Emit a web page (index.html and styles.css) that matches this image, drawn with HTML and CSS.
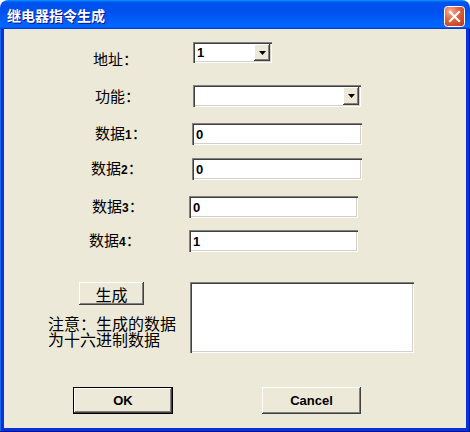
FILE: index.html
```html
<!DOCTYPE html>
<html lang="zh-CN">
<head>
<meta charset="utf-8">
<title>继电器指令生成</title>
<link rel="stylesheet" href="styles.css">
</head>
<body>
<div class="window">
  <div class="titlebar">
    <span class="title">继电器指令生成</span>
    <button class="close" aria-label="关闭">
      <svg width="21" height="21" viewBox="0 0 21 21">
        <defs>
          <radialGradient id="cg" cx="0.3" cy="0.25" r="0.9">
            <stop offset="0" stop-color="#f7b39a"/>
            <stop offset="0.45" stop-color="#e2643f"/>
            <stop offset="1" stop-color="#c23c1c"/>
          </radialGradient>
        </defs>
        <rect x="0.5" y="0.5" width="20" height="20" rx="3" fill="url(#cg)" stroke="#ffffff"/>
        <path d="M6 6 L15 15 M15 6 L6 15" stroke="#ffffff" stroke-width="2.2" stroke-linecap="square"/>
      </svg>
    </button>
  </div>
  <div class="frame">
    <div class="client">
      <div class="row r1">
        <span class="lbl">地址：</span>
        <div class="combo">
          <span class="val">1</span>
          <span class="drop"><svg width="7" height="4" viewBox="0 0 7 4"><polygon points="0,0 7,0 3.5,4" fill="#000"/></svg></span>
        </div>
      </div>
      <div class="row r2">
        <span class="lbl">功能：</span>
        <div class="combo">
          <span class="val"></span>
          <span class="drop"><svg width="7" height="4" viewBox="0 0 7 4"><polygon points="0,0 7,0 3.5,4" fill="#000"/></svg></span>
        </div>
      </div>
      <div class="row r3">
        <span class="lbl">数据<b class="num">1</b>：</span>
        <div class="tb">0</div>
      </div>
      <div class="row r4">
        <span class="lbl">数据<b class="num">2</b>：</span>
        <div class="tb">0</div>
      </div>
      <div class="row r5">
        <span class="lbl">数据<b class="num">3</b>：</span>
        <div class="tb">0</div>
      </div>
      <div class="row r6">
        <span class="lbl">数据<b class="num">4</b>：</span>
        <div class="tb">1</div>
      </div>
      <div class="bottom">
        <div class="left">
          <button class="btn gen">生成</button>
          <div class="note">
            <span class="note-line">注意：生成的数据</span>
            <span class="note-line">为十六进制数据</span>
          </div>
        </div>
        <div class="memo"></div>
      </div>
      <div class="footer">
        <button class="btn ok">OK</button>
        <button class="btn cancel">Cancel</button>
      </div>
    </div>
  </div>
</div>
</body>
</html>
```

FILE: styles.css
```css
* { box-sizing: border-box; }

body {
  margin: 0;
  background: #ffffff;
  font-family: "Noto Sans CJK SC", "Liberation Sans", sans-serif;
}

.window {
  width: 470px;
  height: 432px;
  display: flex;
  flex-direction: column;
}

.titlebar {
  height: 29px;
  flex: none;
  display: flex;
  align-items: center;
  justify-content: space-between;
  padding: 0 5px 0 7px;
  border-radius: 8px 8px 0 0;
  background: linear-gradient(180deg, #0997ff, #0053ee 8%, #0050ee 40%, #0066ff 88%, #0066ff 93%, #005bff 95%, #003dd7 96%, #003dd7);
}

.title {
  color: #ffffff;
  font-weight: 700;
  font-size: 14px;
  line-height: 16px;
  margin-top: 1px;
  text-shadow: 1px 1px #0f1089;
  white-space: nowrap;
}

.close {
  width: 21px;
  height: 21px;
  padding: 0;
  margin-top: 4px;
  border: 0;
  background: none;
  display: block;
}
.close svg { display: block; }

.frame {
  flex: 1;
  display: flex;
  padding: 0 4px 4px;
  background: #0831d9;
  box-shadow: inset -1px -1px #00138c, inset 1px 0 #166aee;
}

.client {
  flex: 1;
  background: #ece9d8;
  padding-top: 13px;
  display: flex;
  flex-direction: column;
}

.row {
  display: flex;
  align-items: center;
}

.lbl {
  width: 184px;
  flex: none;
  font-size: 15px;
  line-height: 20px;
  color: #000;
  white-space: nowrap;
}

.num {
  font-family: "Liberation Sans", sans-serif;
  font-weight: 700;
  font-size: 12px;
}

.combo,
.tb,
.memo {
  background: #ffffff;
  box-shadow: inset 1px 1px #808080, inset 2px 2px #404040, inset -1px -1px #ffffff, inset -2px -2px #d4d0c8;
}

.combo {
  height: 22px;
  display: flex;
  align-items: center;
  justify-content: space-between;
  padding: 2px;
}

.val,
.tb {
  font-family: "Liberation Sans", sans-serif;
  font-weight: 700;
  font-size: 13px;
  color: #000;
}

.val { padding-left: 2px; }

.drop {
  width: 16px;
  height: 100%;
  display: flex;
  align-items: center;
  justify-content: center;
  background: #ece9d8;
  box-shadow: inset -1px -1px #404040, inset 1px 1px #ffffff, inset -2px -2px #808080;
}
.drop svg { display: block; }

.tb {
  height: 22px;
  display: flex;
  align-items: center;
  padding-left: 4px;
}

.r1 .lbl { padding-left: 89px; margin-top: 6px; margin-bottom: -6px; }
.r1 .combo { margin-left: 5px; width: 79px; height: 21px; }

.r2 { margin-top: 22px; }
.r2 .lbl { padding-left: 91px; }
.r2 .combo { margin-left: 5px; width: 168px; }

.r3 { margin-top: 16px; }
.r3 .lbl { padding-left: 91px; }
.r3 .tb { margin-left: 4px; width: 170px; }

.r4 { margin-top: 13px; }
.r4 .lbl { padding-left: 87px; }
.r4 .tb { margin-left: 4px; width: 170px; }

.r5 { margin-top: 16px; }
.r5 .lbl { padding-left: 88px; }
.r5 .tb { margin-left: 1px; width: 169px; }

.r6 { margin-top: 12px; }
.r6 .lbl { padding-left: 85px; }
.r6 .tb { margin-left: 1px; width: 169px; }

.bottom {
  margin-top: 30px;
  display: flex;
}

.left {
  width: 186px;
  flex: none;
  display: flex;
  flex-direction: column;
  align-items: flex-start;
}

.btn {
  background: #ece9d8;
  border: 0;
  padding: 0;
  color: #000;
  box-shadow: inset -1px -1px #404040, inset 1px 1px #ffffff, inset -2px -2px #808080;
}

.gen {
  margin-left: 75px;
  width: 65px;
  height: 23px;
  font-family: "Noto Sans CJK SC", sans-serif;
  font-size: 16px;
  line-height: 20px;
}

.note {
  margin: 10px 0 0 44px;
  display: flex;
  flex-direction: column;
  font-size: 16px;
  color: #000;
  white-space: nowrap;
}

.note-line {
  display: block;
  height: 16px;
  line-height: 16px;
}

.memo {
  width: 224px;
  height: 71px;
}

.footer {
  margin-top: 34px;
  display: flex;
}

.ok,
.cancel {
  height: 27px;
  font-family: "Liberation Sans", sans-serif;
  font-weight: 700;
  font-size: 13px;
}

.ok {
  margin-left: 69px;
  width: 100px;
  box-shadow: inset 0 0 0 1px #000000, inset -2px -2px #404040, inset 2px 2px #ffffff, inset -3px -3px #808080;
}

.cancel {
  margin-left: 89px;
  width: 99px;
}
```
